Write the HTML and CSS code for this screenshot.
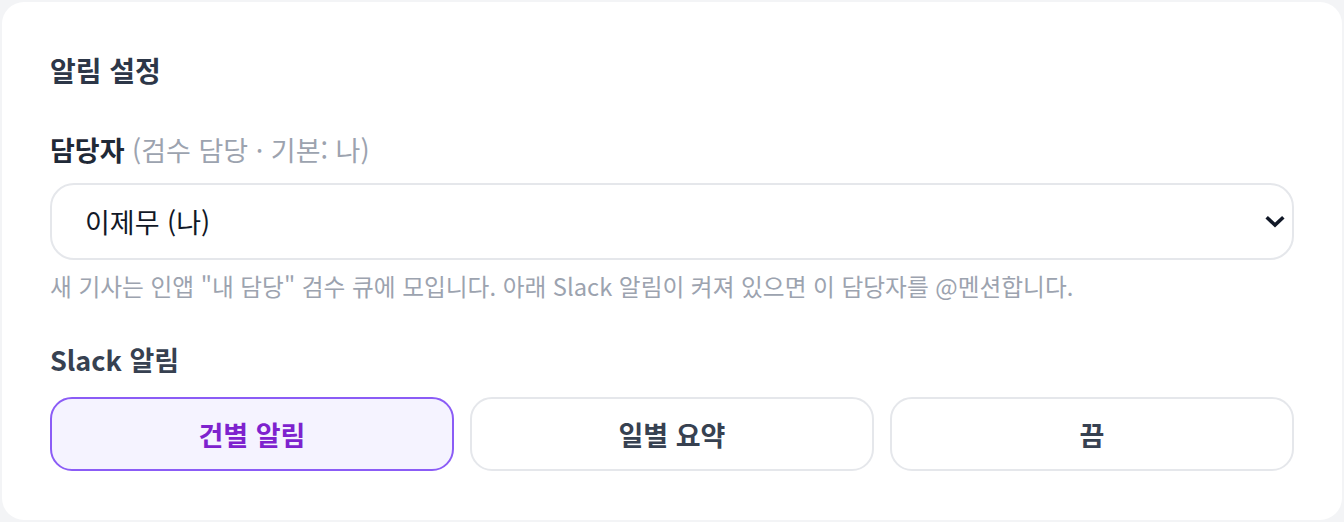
FILE: index.html
```html
<!DOCTYPE html>
<html lang="ko">
<head>
<meta charset="utf-8">
<title>알림 설정</title>
<link rel="stylesheet" href="styles.css">
</head>
<body>
<section class="card">
  <h2 class="title">알림 설정</h2>
  <div class="field">
    <label class="label">담당자 <span class="hint">(검수 담당 · 기본: 나)</span></label>
    <div class="select">
      <span class="select-value">이제무 (나)</span>
      <svg class="chevron" width="20" height="14" viewBox="0 0 20 14"><path d="M3 3.5 L10 10 L17 3.5" fill="none" stroke="#111827" stroke-width="3.6" stroke-linecap="square"/></svg>
    </div>
    <p class="help">새 기사는 인앱 "내 담당" 검수 큐에 모입니다. 아래 Slack 알림이 켜져 있으면 이 담당자를 @멘션합니다.</p>
  </div>
  <div class="field slack">
    <div class="label">Slack 알림</div>
    <div class="options">
      <button class="opt active">건별 알림</button>
      <button class="opt">일별 요약</button>
      <button class="opt">끔</button>
    </div>
  </div>
</section>
</body>
</html>
```

FILE: styles.css
```css
* { box-sizing: border-box; }
html, body { margin: 0; }
body {
  background: #f3f4f6;
  padding: 2px;
  font-family: "Noto Sans CJK KR", "Noto Sans", sans-serif;
}
.card {
  background: #ffffff;
  border-radius: 22px;
  height: 518px;
  padding: 48px 48px 48px 48px;
}
.title {
  margin: 0;
  font-size: 28px;
  line-height: 40px;
  font-weight: 700;
  color: #2d3748;
}
.field { margin-top: 40px; }
.label {
  display: block;
  font-size: 27px;
  line-height: 40px;
  font-weight: 600;
  color: #1f2937;
}
.hint { font-weight: 400; color: #9ca3af; }
.select {
  margin-top: 13px;
  height: 77px;
  border: 2px solid #e5e7eb;
  border-radius: 24px;
  display: flex;
  align-items: center;
  justify-content: space-between;
  padding: 0 7px 0 33px;
}
.select-value { font-size: 27px; color: #111827; }
.chevron { display: block; }
.help {
  margin: 9px 0 0;
  font-size: 23.7px;
  line-height: 34px;
  color: #9ca3af;
}
.slack { margin-top: 37px; }
.slack .label { color: #374151; }
.options {
  margin-top: 17px;
  display: grid;
  grid-template-columns: repeat(3, 1fr);
  gap: 16px;
}
.opt {
  height: 74px;
  border: 2px solid #e5e7eb;
  border-radius: 22px;
  background: #ffffff;
  font-family: inherit;
  font-size: 27px;
  font-weight: 600;
  color: #374151;
}
.opt.active {
  border-color: #8b5cf6;
  background: #f5f3ff;
  color: #7e22ce;
  font-weight: 700;
}
```
